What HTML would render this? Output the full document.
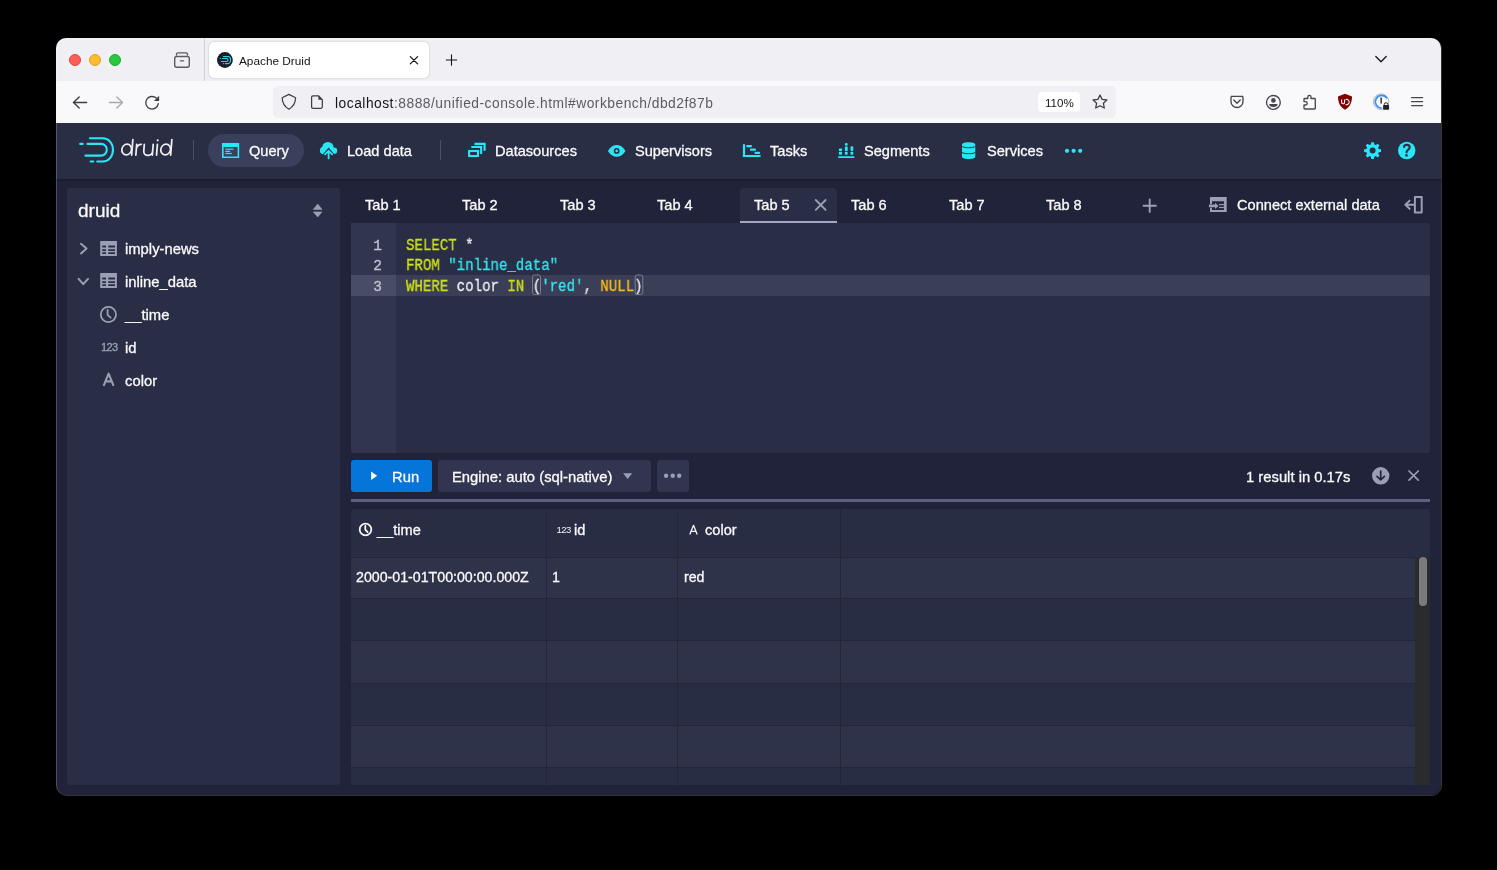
<!DOCTYPE html>
<html><head><meta charset="utf-8">
<style>
*{box-sizing:border-box;margin:0;padding:0}
html,body{width:1497px;height:870px;overflow:hidden;background:#000;font-family:"Liberation Sans",sans-serif}
body{position:relative}
.a{position:absolute}
#win{position:absolute;left:56px;top:38px;width:1385px;height:757px;border-radius:10px;overflow:hidden;background:#20233a}
.tl{position:absolute;top:54px;width:12px;height:12px;border-radius:50%}
.t{position:absolute;white-space:nowrap;line-height:1;will-change:transform}
.w{-webkit-text-stroke:0.3px #fafafc}
.w{color:#fafafc}
svg{position:absolute;overflow:visible}
.nv{font-size:14.6px}
.sb{font-size:14.8px}
.tb{font-size:14.6px}
.ct{font-size:14.8px}
.hd{font-size:14.6px}
.td{font-size:14.2px}
.mono{position:absolute;font-family:"Liberation Mono",monospace;font-size:14.08px;color:#eef0f2;will-change:transform;-webkit-text-stroke:0.3px currentColor}
.ln{height:20.3px;line-height:20.3px;white-space:pre;position:relative}
.ln .n{position:absolute;left:0;width:34px;text-align:right;color:#b9bccb}
.k{color:#cde01a}.s{color:#36e3ee}.nl{color:#f7bb1a}
</style></head><body>
<div id="win">
  <div class="a" style="left:0;top:0;width:100%;height:43px;background:#f0f0f4"></div>
  <div class="a" style="left:0;top:43px;width:100%;height:41.5px;background:#f9f9fb"></div>
  <div class="a" style="left:0;top:84.5px;width:100%;height:56px;background:#2a2e45"></div>
</div>

<!-- ===== Firefox tab strip ===== -->
<div class="tl" style="left:69px;background:#fe5f57;border:0.5px solid #e0443e"></div>
<div class="tl" style="left:89px;background:#febc2e;border:0.5px solid #dea123"></div>
<div class="tl" style="left:109px;background:#28c840;border:0.5px solid #1aab29"></div>

<div class="a" style="left:204px;top:38px;width:1px;height:43px;background:#cfcfd8"></div>
<div class="a" style="left:209px;top:41.5px;width:220px;height:36.5px;background:#fff;border-radius:5px;box-shadow:0 0 2px rgba(0,0,0,.25)"></div>

<div class="t" style="left:239px;top:56px;font-size:11.8px;color:#15141a">Apache Druid</div>

<!-- ===== Firefox toolbar ===== -->
<div class="a" style="left:273px;top:86px;width:843px;height:32px;background:#f0f0f4;border-radius:5px"></div>
<div class="a" style="left:1038px;top:92px;width:42px;height:20px;background:#fff;border-radius:4px"></div>
<div class="t" style="left:1044.5px;top:97px;font-size:11.6px;color:#15141a">110%</div>
<div class="t" style="left:335px;top:96.5px;font-size:13.8px;letter-spacing:0.5px;color:#15141a">localhost<span style="color:#5b5b66">:8888/unified-console.html#workbench/dbd2f87b</span></div>

<!-- ===== Druid ===== -->
<!-- navbar logo -->
<div class="a" style="left:193px;top:140px;width:1px;height:20px;background:#4a4f68"></div>
<div class="a" style="left:208px;top:134px;width:96px;height:33px;border-radius:17px;background:#3a3f5c"></div>
<div class="t w nv" style="left:249px;top:143.5px">Query</div>
<div class="t w nv" style="left:347px;top:143.5px">Load data</div>
<div class="a" style="left:440px;top:140px;width:1px;height:20px;background:#4a4f68"></div>
<div class="t w nv" style="left:495px;top:143.5px">Datasources</div>
<div class="t w nv" style="left:635px;top:143.5px">Supervisors</div>
<div class="t w nv" style="left:770px;top:143.5px">Tasks</div>
<div class="t w nv" style="left:864px;top:143.5px">Segments</div>
<div class="t w nv" style="left:987px;top:143.5px">Services</div>

<!-- sidebar -->
<div class="a" style="left:67px;top:188px;width:273px;height:597px;background:#292d45;border-radius:3px"></div>
<div class="t w" style="left:78px;top:201px;font-size:19px">druid</div>
<div class="t w sb" style="left:125px;top:241.8px">imply-news</div>
<div class="t w sb" style="left:125px;top:274.8px">inline_data</div>
<div class="t w sb" style="left:125px;top:307.8px">__time</div>
<div class="t w sb" style="left:125px;top:340.8px">id</div>
<div class="t w sb" style="left:125px;top:373.8px">color</div>

<!-- tabs -->
<div class="a" style="left:740px;top:188px;width:97px;height:35px;background:#292d45;border-radius:4px 4px 0 0"></div>
<div class="a" style="left:740px;top:221px;width:97px;height:2px;background:#a3a7bf"></div>
<div class="t w tb" style="left:365px;top:198px">Tab 1</div>
<div class="t w tb" style="left:462px;top:198px">Tab 2</div>
<div class="t w tb" style="left:560px;top:198px">Tab 3</div>
<div class="t w tb" style="left:657px;top:198px">Tab 4</div>
<div class="t w tb" style="left:754px;top:198px">Tab 5</div>
<div class="t w tb" style="left:851px;top:198px">Tab 6</div>
<div class="t w tb" style="left:949px;top:198px">Tab 7</div>
<div class="t w tb" style="left:1046px;top:198px">Tab 8</div>
<div class="t w tb" style="left:1237px;top:198px">Connect external data</div>

<!-- editor -->
<div class="a" style="left:351px;top:223px;width:1079px;height:229.5px;background:#292d45;border-radius:0 3px 3px 3px;overflow:hidden">
  <div class="a" style="left:0;top:0;width:45px;height:100%;background:#31354f"></div>
  <div class="a" style="left:0;top:51.9px;width:100%;height:21px;background:#3a3e56"></div>
  <div class="a" style="left:0;top:51.9px;width:45px;height:21px;background:#484c66"></div>
</div>
<div class="mono" style="left:406px;top:236px;font-size:16px;transform:scaleX(0.88);transform-origin:0 0">
  <div class="ln"><span class="k">SELECT</span> *</div>
  <div class="ln"><span class="k">FROM</span> <span class="s">"inline_data"</span></div>
  <div class="ln"><span class="k">WHERE</span> color <span class="k">IN</span> (<span class="s">'red'</span>, <span class="nl">NULL</span>)</div>
</div>
<div class="mono" style="left:341px;top:235.5px;font-size:14.5px;width:41px;text-align:right;color:#c0c3d0">
  <div class="ln">1</div><div class="ln">2</div><div class="ln">3</div>
</div>

<!-- controls -->
<div class="a" style="left:351px;top:460px;width:81px;height:32px;background:#0675d9;border-radius:3px"></div>
<div class="t w ct" style="left:392px;top:469.5px">Run</div>
<div class="a" style="left:438px;top:460px;width:213px;height:32px;background:#31354f;border-radius:3px"></div>
<div class="t w ct" style="left:452px;top:469.5px">Engine: auto (sql-native)</div>
<div class="a" style="left:657px;top:460px;width:32px;height:32px;background:#31354f;border-radius:3px"></div>
<div class="t w ct" style="left:1246px;top:469.5px">1 result in 0.17s</div>
<div class="a" style="left:351px;top:499px;width:1079px;height:3px;background:#5b6080"></div>

<!-- table -->
<div class="a" style="left:351px;top:509px;width:1079px;height:276px;background:#292d44;border-radius:3px 3px 0 0;overflow:hidden">
<div class="a" style="left:0;top:47.5px;width:1064px;height:41.0px;background:#2f3349;border-top:1px solid #23263a"></div>
<div class="a" style="left:0;top:88.5px;width:1064px;height:42.8px;background:#292d44;border-top:1px solid #23263a"></div>
<div class="a" style="left:0;top:131.3px;width:1064px;height:42.3px;background:#2f3349;border-top:1px solid #23263a"></div>
<div class="a" style="left:0;top:173.6px;width:1064px;height:42.6px;background:#292d44;border-top:1px solid #23263a"></div>
<div class="a" style="left:0;top:216.2px;width:1064px;height:42.2px;background:#2f3349;border-top:1px solid #23263a"></div>
<div class="a" style="left:0;top:258.4px;width:1064px;height:42.6px;background:#292d44;border-top:1px solid #23263a"></div><div class="a" style="left:195.0px;top:0;width:1px;height:100%;background:#23263a"></div><div class="a" style="left:326.0px;top:0;width:1px;height:100%;background:#23263a"></div><div class="a" style="left:489.0px;top:0;width:1px;height:100%;background:#23263a"></div>
<div class="a" style="left:1064px;top:47.5px;width:15px;height:240px;background:#2b2b2e"></div>
<div class="a" style="left:1068px;top:48px;width:8px;height:49px;background:#7a7a7c;border-radius:4px"></div>
</div>
<div class="t w hd" style="left:377px;top:523px">__time</div>
<div class="t w hd" style="left:574px;top:523px">id</div>
<div class="t w hd" style="left:705px;top:523px">color</div>
<div class="t w td" style="left:356px;top:570px">2000-01-01T00:00:00.000Z</div>
<div class="t w td" style="left:552px;top:570px">1</div>
<div class="t w td" style="left:684px;top:570px">red</div>

<div class="a" style="left:56px;top:178.5px;width:1385px;height:4px;background:linear-gradient(rgba(0,0,0,0.22),rgba(0,0,0,0))"></div>
<div class="a" style="left:55.5px;top:37.5px;width:1386px;height:758.5px;border-radius:10.5px;border:1px solid rgba(255,255,255,0.2)"></div>
<!-- ===== ICONS overlay ===== -->
<svg width="1497" height="870" viewBox="0 0 1497 870" style="left:0;top:0">
<!-- firefox tab strip -->
<g fill="none" stroke="#5b5b66" stroke-width="1.4" stroke-linecap="round" stroke-linejoin="round">
  <rect x="174.7" y="56.5" width="14.6" height="10.8" rx="2"/>
  <path d="M176.5 55 V54.3 A1.4 1.4 0 0 1 177.9 52.9 H186.1 A1.4 1.4 0 0 1 187.5 54.3 V55"/>
  <path d="M180.3 60.8 H183.7" stroke-width="1.2"/>
</g>
<circle cx="224.9" cy="60" r="7.9" fill="#1c1d2b"/>
<g fill="none" stroke="#2ad6e8" stroke-width="1.05" stroke-linecap="round">
  <path d="M223.4 56.4 H227.8 A2.8 3.6 0 0 1 227.8 63.6 H225.5"/>
  <path d="M222.5 58.5 H226.6 A1.45 1.45 0 0 1 226.6 61.4 H221.3"/>
  <path d="M220.2 58.5 H220.4 M223.2 63.6 H223.4"/>
</g>
<g stroke="#15141a" stroke-width="1.25" stroke-linecap="round">
  <path d="M410.3 56.6 L417.6 63.9 M417.6 56.6 L410.3 63.9"/>
</g>
<g stroke="#15141a" stroke-width="1.1" stroke-linecap="round">
  <path d="M451.5 54.8 V65.2 M446.3 60 H456.7"/>
</g>
<path d="M1375.8 56.5 L1381 61.7 L1386.2 56.5" fill="none" stroke="#15141a" stroke-width="1.3" stroke-linecap="round" stroke-linejoin="round"/>

<!-- firefox toolbar -->
<g fill="none" stroke-width="1.4" stroke-linecap="round" stroke-linejoin="round">
  <path d="M73.4 102.5 H86.6 M79.2 96.9 L73.4 102.5 L79.2 108.1" stroke="#3e3e46"/>
  <path d="M109.4 102.5 H122.6 M116.8 96.9 L122.6 102.5 L116.8 108.1" stroke="#a9a9b1"/>
  <path d="M158.3 103.7 A6.3 6.3 0 1 1 156.3 98.1" stroke="#3e3e46" stroke-width="1.35"/>
</g>
<path d="M154 100.9 L159.1 95.8 V100.9 Z" fill="#3e3e46"/>
<g fill="none" stroke="#3e3e46" stroke-width="1.25" stroke-linejoin="round">
  <path d="M288.9 94.4 L295.6 97.8 C295.6 103.5 293 106.8 288.9 109.2 C284.8 106.8 282.2 103.5 282.2 97.8 Z"/>
  <path d="M318.4 95.8 H313 A1.4 1.4 0 0 0 311.6 97.2 V106.9 A1.4 1.4 0 0 0 313 108.3 H320.9 A1.4 1.4 0 0 0 322.3 106.9 V99.7 Z"/>
</g>
<path d="M318.4 95.8 L322.3 99.7 H318.4 Z" fill="#3e3e46"/>
<path d="M1100 95 L1102.1 99.4 L1106.9 100 L1103.4 103.3 L1104.3 108 L1100 105.7 L1095.7 108 L1096.6 103.3 L1093.1 100 L1097.9 99.4 Z" fill="none" stroke="#3e3e46" stroke-width="1.3" stroke-linejoin="round"/>
<!-- right toolbar -->
<g fill="none" stroke="#46464f" stroke-width="1.35" stroke-linecap="round" stroke-linejoin="round">
  <path d="M1231 97.2 A1 1 0 0 1 1232 96.3 H1242 A1 1 0 0 1 1243 97.2 V101.5 A6 6 0 0 1 1231 101.5 Z"/>
  <path d="M1233.8 100 L1237 103.3 L1240.2 100"/>
  <circle cx="1273.4" cy="102.4" r="6.9"/>
  <path d="M1305 98.5 H1307.8 V97 A1.6 1.6 0 0 1 1311 97 V98.5 H1314.5 A0.8 0.8 0 0 1 1315.3 99.3 V108.2 A0.8 0.8 0 0 1 1314.5 109 H1304.8 A0.8 0.8 0 0 1 1304 108.2 V105 H1305.5 A1.7 1.7 0 0 0 1305.5 101.6 H1304 V99.3 A0.8 0.8 0 0 1 1305 98.5 Z"/>
  <path d="M1411.6 97.6 H1422.6 M1411.6 101.6 H1422.6 M1411.6 105.6 H1422.6"/>
</g>
<circle cx="1273.4" cy="100.4" r="2.3" fill="#46464f"/>
<path d="M1269.2 104 H1277.6 A4.2 3 0 0 1 1269.2 104 Z" fill="#46464f"/>
<path d="M1345 93.8 L1352 96.4 C1352 103 1349.5 107 1345 109.8 C1340.5 107 1338 103 1338 96.4 Z" fill="#800000"/>
<path d="M1341.6 99.5 V102.3 A1.5 1.5 0 0 0 1344.6 102.3 V99.5 M1345.6 99.5 A2.7 2.7 0 1 1 1345.6 104.6" fill="none" stroke="#fff" stroke-width="1.1"/>
<circle cx="1381.1" cy="101.7" r="7.8" fill="none" stroke="#8a8a8a" stroke-width="0.6"/>
<path d="M1387 98.4 A6.3 6.3 0 1 0 1381.6 108" fill="none" stroke="#3b8ff5" stroke-width="1.8"/>
<rect x="1380.4" y="97.5" width="1.5" height="6" fill="#333"/>
<rect x="1383.1" y="105" width="6" height="4.7" rx="0.8" fill="#222"/>
<path d="M1384.3 105.5 V104.5 A1.8 1.8 0 0 1 1387.9 104.5 V105.5" fill="none" stroke="#222" stroke-width="1"/>

<!-- druid navbar -->
<defs><mask id="cloudm" maskUnits="userSpaceOnUse" x="310" y="135" width="40" height="30"><rect x="310" y="135" width="40" height="30" fill="#fff"/><path d="M317.6 160.5 L328.6 147.6 L339.6 160.5 Z" fill="#000"/></mask></defs>
<path d="M325 154.4 L328.6 150.8 L332.2 154.4 M328.6 151 V158.4" fill="none" stroke="#29e6f6" stroke-width="1.8" stroke-linecap="round" stroke-linejoin="round"/>
<g fill="none" stroke="#ededf2" stroke-width="1.75" stroke-linecap="round" transform="translate(0 155.7) skewX(-4.5) translate(0 -155.7)">
  <ellipse cx="126.2" cy="149.5" rx="4.85" ry="5.35"/>
  <path d="M131.6 139.6 V155"/>
  <path d="M135.8 144.4 V155 M135.8 148.6 C136.3 145.6 137.8 144.3 140.4 144.3"/>
  <path d="M143.4 144.4 V150.9 A4.45 4.45 0 0 0 152.3 150.9 M152.3 144.4 V155"/>
  <path d="M156.5 144.4 V155"/>
  <ellipse cx="165.15" cy="149.5" rx="4.85" ry="5.35"/>
  <path d="M170.6 139.6 V155"/>
</g>
<circle cx="157.7" cy="140.3" r="1.1" fill="#ededf2"/>
<g fill="none" stroke="#29e6f6" stroke-width="2.1" stroke-linecap="round">
  <path d="M89.9 138.2 H103 A10 11.65 0 0 1 103 161.5 H97.2"/>
  <path d="M90.6 161.5 H93.2"/>
  <path d="M87.5 143.9 H101 A5.8 5.85 0 0 1 101 155.6 H85.4"/>
  <path d="M80.2 143.9 H82.7"/>
</g>
<g fill="#29e6f6">
  <path d="M222 143 H239.2 V158.1 H222 Z M223.6 147 V156.5 H237.6 V147 Z" fill-rule="evenodd"/>
  <rect x="225.3" y="148.6" width="8.2" height="1.2"/>
  <rect x="225.3" y="150.8" width="4.8" height="1.2"/>
  <rect x="225.3" y="152.9" width="6.5" height="1.2"/>
  <g mask="url(#cloudm)"><circle cx="323.7" cy="150.6" r="3.8"/><circle cx="327.9" cy="147.6" r="5.7"/><circle cx="333.9" cy="150.7" r="3.3"/><rect x="323.7" y="148" width="10.2" height="6"/></g>
</g>
<g fill="none" stroke="#29e6f6" stroke-width="2.1">
  <rect x="469.1" y="151" width="8.9" height="5"/>
  <path d="M471.3 147 H481.15 V154"/>
  <path d="M474.5 143.9 H484.6 V150.8"/>
</g>
<path d="M607.9 150.9 C610.5 146.6 613.6 145 616.7 145 C619.8 145 622.9 146.6 625.5 150.9 C622.9 155.1 619.8 156.7 616.7 156.7 C613.6 156.7 610.5 155.1 607.9 150.9 Z" fill="#29e6f6"/>
<circle cx="616.7" cy="150.9" r="2.9" fill="#2a2e45"/>
<circle cx="616.7" cy="150.9" r="1.3" fill="#29e6f6"/>
<g fill="#29e6f6">
  <rect x="742.9" y="144.2" width="2.2" height="12.8"/>
  <rect x="742.9" y="155" width="17.7" height="2"/>
  <rect x="746.2" y="145.1" width="5.8" height="2.2" rx="1"/>
  <rect x="749.9" y="148.6" width="6.1" height="2.1" rx="1"/>
  <rect x="754.5" y="151.8" width="5.6" height="2.1" rx="1"/>
  <rect x="838" y="156.3" width="16.5" height="1.7" rx="0.8"/>
  <rect x="838.9" y="148.6" width="3.2" height="2.3" rx="0.6"/>
  <rect x="838.9" y="151.8" width="3.2" height="2.9" rx="0.6"/>
  <rect x="844.9" y="143" width="2.8" height="2.8" rx="1.2"/>
  <rect x="844.9" y="146.6" width="2.8" height="4.4" rx="0.6"/>
  <rect x="844.9" y="151.8" width="2.8" height="2.9" rx="0.6"/>
  <rect x="850.5" y="146.2" width="2.8" height="4.7" rx="1.2"/>
  <rect x="850.5" y="151.8" width="2.8" height="2.9" rx="0.6"/>
  <path d="M962 144.4 C962 141.4 975.3 141.4 975.3 144.4 V156.8 C975.3 159.8 962 159.8 962 156.8 Z"/>
  <circle cx="1067" cy="150.8" r="2.1"/><circle cx="1073.6" cy="150.8" r="2.1"/><circle cx="1080.2" cy="150.8" r="2.1"/>
</g>
<g fill="none" stroke="#2a2e45" stroke-width="1">
  <path d="M962 146 C962 148.3 975.3 148.3 975.3 146"/>
  <path d="M962 152 C962 154.3 975.3 154.3 975.3 152"/>
</g>
<g fill="#29e6f6">
  <g transform="translate(1372.6 150.6) scale(0.92) translate(-1372.6 -151.1)"><path d="M1371.2 141.9 H1374 L1374.4 144.4 L1376.1 145.1 L1378.1 143.6 L1380.1 145.6 L1378.6 147.6 L1379.3 149.3 L1381.8 149.7 V152.5 L1379.3 152.9 L1378.6 154.6 L1380.1 156.6 L1378.1 158.6 L1376.1 157.1 L1374.4 157.8 L1374 160.3 H1371.2 L1370.8 157.8 L1369.1 157.1 L1367.1 158.6 L1365.1 156.6 L1366.6 154.6 L1365.9 152.9 L1363.4 152.5 V149.7 L1365.9 149.3 L1366.6 147.6 L1365.1 145.6 L1367.1 143.6 L1369.1 145.1 L1370.8 144.4 Z"/>
  <circle cx="1372.6" cy="151.1" r="6.4"/></g>
  <circle cx="1406.7" cy="150.5" r="8.7"/>
</g>
<circle cx="1372.6" cy="150.6" r="3.0" fill="#2a2e45"/>
<path d="M1404 146.9 C1404.3 144.2 1409.7 144.1 1409.7 147.3 C1409.7 149.6 1406.9 149.9 1406.5 152.2" fill="none" stroke="#2a2e45" stroke-width="2.1" stroke-linecap="round"/>
<rect x="1405.3" y="154.2" width="2.4" height="2.3" fill="#2a2e45"/>

<!-- sidebar -->
<path d="M317.7 204.1 L322 209.4 H313.3 Z M313.3 211.9 H322 L317.7 217 Z" fill="#9a9fb5" stroke="#9a9fb5" stroke-width="0.6" stroke-linejoin="round"/>
<g fill="none" stroke="#9a9fb5" stroke-width="2" stroke-linecap="round" stroke-linejoin="round">
  <path d="M81 243.8 L86.5 248.6 L81 253.4"/>
  <path d="M78.6 278.8 L83.3 284.2 L88 278.8"/>
</g>
<g id="tbl" fill="#9a9fb5">
  <path d="M100.2 241.1 H116.9 V256 H100.2 Z M102.3 245.6 V247.5 H106 V245.6 Z M108.3 245.6 V247.5 H115 V245.6 Z M102.3 249.2 V250.9 H106 V249.2 Z M108.3 249.2 V250.9 H115 V249.2 Z M102.3 252.3 V254 H106 V252.3 Z M108.3 252.3 V254 H115 V252.3 Z" fill-rule="evenodd"/>
</g>
<g transform="translate(0 32)" fill="#9a9fb5">
  <path d="M100.2 241.1 H116.9 V256 H100.2 Z M102.3 245.6 V247.5 H106 V245.6 Z M108.3 245.6 V247.5 H115 V245.6 Z M102.3 249.2 V250.9 H106 V249.2 Z M108.3 249.2 V250.9 H115 V249.2 Z M102.3 252.3 V254 H106 V252.3 Z M108.3 252.3 V254 H115 V252.3 Z" fill-rule="evenodd"/>
</g>
<g fill="none" stroke="#9a9fb5" stroke-width="1.8" stroke-linecap="round">
  <circle cx="108.4" cy="314.5" r="7.6"/>
  <path d="M107.6 310 V314.8 L110.6 317.6"/>
</g>
<text x="101" y="351.3" font-family="Liberation Sans" font-size="11" fill="#9a9fb5" stroke="#9a9fb5" stroke-width="0.35" letter-spacing="-0.6">123</text>
<path d="M103.6 385.8 L108.6 373.6 L113.6 385.8 M105.4 381.4 H111.8" fill="none" stroke="#9a9fb5" stroke-width="2.1" stroke-linejoin="round"/>

<!-- tabs -->
<g stroke="#9a9fb5" stroke-width="1.9" stroke-linecap="round">
  <path d="M815.8 200 L825.6 209.8 M825.6 200 L815.8 209.8"/>
  <path d="M1149.7 199.5 V212 M1143.5 205.7 H1155.9"/>
</g>
<g fill="#9a9fb5">
  <path d="M1210 197.1 H1226.7 V212 H1210 V207.8 H1212 V209.9 H1223.9 V201.3 H1212 V204 H1210 Z" />
  <rect x="1219" y="204" width="4.9" height="1.2"/>
  <rect x="1219" y="206.9" width="4.9" height="1.2"/>
  <path d="M1208.9 204.6 H1215 V202.8 L1218.6 205.9 L1215 209 V207.2 H1208.9 Z"/>
</g>
<g fill="none" stroke="#9a9fb5" stroke-width="2" stroke-linecap="round" stroke-linejoin="round">
  <rect x="1414.9" y="197" width="6.8" height="15.6" stroke-linecap="butt"/>
  <path d="M1414 204.7 H1405.6 M1409.6 200.6 L1405.4 204.7 L1409.6 208.8"/>
</g>

<!-- editor bracket boxes -->
<g fill="none" stroke="#7a7e93" stroke-width="1">
  <rect x="532.5" y="275" width="8" height="19.5" rx="2"/>
  <rect x="635.2" y="275" width="7.6" height="19.5" rx="2"/>
</g>

<!-- controls -->
<path d="M371.1 471.4 L377.1 475.7 L371.1 480 Z" fill="#fff"/>
<path d="M623.1 473.2 H632.2 L627.65 479.1 Z" fill="#9a9fb5"/>
<g fill="#9a9fb5">
  <circle cx="666.1" cy="475.8" r="2.2"/><circle cx="672.7" cy="475.8" r="2.2"/><circle cx="679.2" cy="475.8" r="2.2"/>
  <circle cx="1380.7" cy="475.8" r="8.7"/>
</g>
<g fill="none" stroke="#20233a" stroke-width="1.7" stroke-linecap="round" stroke-linejoin="round">
  <path d="M1380.7 471 V479.8 M1377 476.4 L1380.7 480 L1384.4 476.4"/>
</g>
<path d="M1409 471 L1418.3 480.2 M1418.3 471 L1409 480.2" stroke="#9a9fb5" stroke-width="1.7" stroke-linecap="round"/>

<!-- table header icons -->
<g fill="none" stroke="#f5f6fa" stroke-width="1.8" stroke-linecap="round">
  <circle cx="365.5" cy="529.5" r="5.8"/>
  <path d="M365.3 526 V529.7 L367.6 532"/>
</g>
<text x="556.5" y="533" font-family="Liberation Sans" font-size="9.5" fill="#f5f6fa" letter-spacing="-0.5">123</text>
<path d="M689.8 534.4 L693.5 525.3 L697.2 534.4 M691.2 531.4 H695.8" fill="none" stroke="#f5f6fa" stroke-width="1.3" stroke-linejoin="round"/>
</svg>
</body></html>
